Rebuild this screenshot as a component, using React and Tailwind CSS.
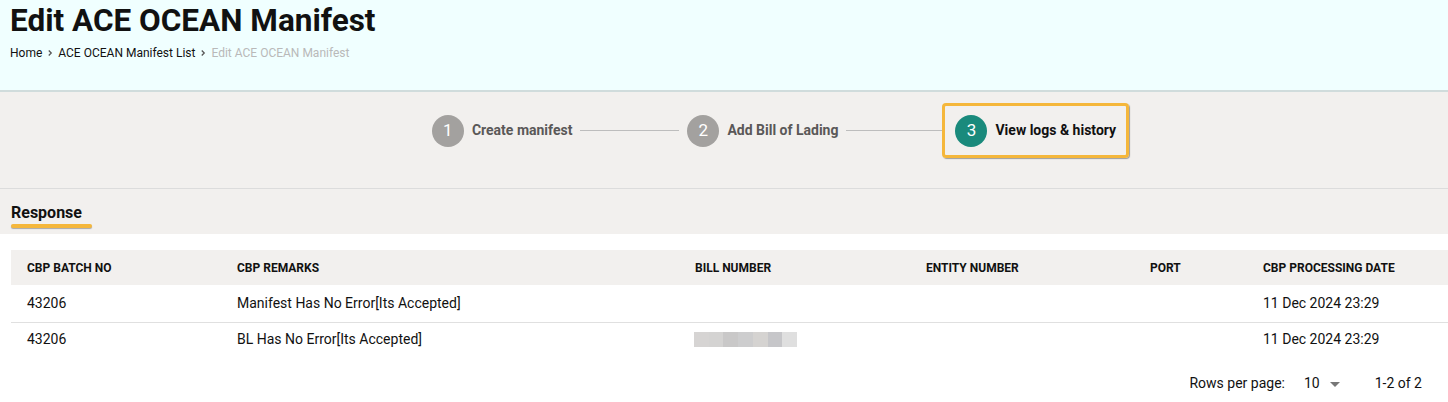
import React from 'react';

const rows = [
  { batch: '43206', remarks: 'Manifest Has No Error[Its Accepted]', bill: null, date: '11 Dec 2024 23:29' },
  { batch: '43206', remarks: 'BL Has No Error[Its Accepted]', bill: 'blur', date: '11 Dec 2024 23:29' },
];

const Chevron = () => (
  <svg width="10" height="10" viewBox="0 0 24 24" className="mx-[3px] text-[#555]">
    <path d="M9 6l6 6-6 6" fill="none" stroke="currentColor" strokeWidth="3" />
  </svg>
);

function Step({ n, label, active }) {
  return (
    <div className="flex items-center">
      <div
        className={
          active
            ? 'w-8 h-8 rounded-full bg-[#1a8a7c] text-white flex items-center justify-center text-[17px]'
            : 'w-8 h-8 rounded-full bg-[#a3a19f] text-white flex items-center justify-center text-[17px]'
        }
      >
        {n}
      </div>
      <span className={active ? 'ml-2 text-[14px] font-bold text-[#111]' : 'ml-2 text-[14px] font-bold text-[#5a5858]'}>
        {label}
      </span>
    </div>
  );
}

function BlurBlock() {
  const shades = ['#d6d4d3', '#d4d3d2', '#c9c8c8', '#cdcdce', '#d5d3d1', '#c6c6c9', '#dfdfdf'];
  return (
    <div className="flex h-[15px] w-[103px]">
      {shades.map((c, i) => (
        <div key={i} className="flex-1 h-full" style={{ background: c }} />
      ))}
    </div>
  );
}

export default function App() {
  return (
    <div className="w-[1448px] h-[402px] bg-white font-['Roboto',sans-serif] overflow-hidden">
      {/* header */}
      <div className="h-[92px] bg-[#f0ffff] border-b-2 border-[#d0dcdc] px-[10px] pt-[2px]">
        <h1 className="text-[31.5px] leading-[37px] font-bold text-[#111]">Edit ACE OCEAN Manifest</h1>
        <div className="flex items-center mt-[5px] text-[12px] text-[#111]">
          <span>Home</span>
          <Chevron />
          <span>ACE OCEAN Manifest List</span>
          <Chevron />
          <span className="text-[#b9b9b9]">Edit ACE OCEAN Manifest</span>
        </div>
      </div>

      {/* stepper */}
      <div className="h-[97px] bg-[#f2f0ee] border-b border-[#dcdcdc] flex items-start justify-center pl-[113px] pt-[11px]">
        <div className="flex items-center h-[55px]">
          <Step n="1" label="Create manifest" />
          <div className="w-[99px] h-px bg-[#bdbdbd] mx-2" />
          <Step n="2" label="Add Bill of Lading" />
          <div className="w-[96px] h-px bg-[#bdbdbd] ml-2" />
        </div>
        <div className="border-[3px] border-[#f5b73b] rounded-[4px] h-[55px] px-[10px] flex items-center shadow-[1px_1px_1px_rgba(0,0,0,0.35)]">
          <Step n="3" label="View logs & history" active />
        </div>
      </div>

      {/* response title */}
      <div className="h-[45px] bg-[#f2f0ee] px-[11px] pt-[12px]">
        <div className="inline-block">
          <div className="text-[16px] font-bold leading-[18px] text-[#111]">Response</div>
          <div className="mt-[2px] h-[4px] w-[81px] rounded-full bg-[#f5b73b] shadow-[0_1px_1px_rgba(0,0,0,0.3)]" />
        </div>
      </div>

      {/* table */}
      <div className="pl-[11px] pt-[16px]">
        <table className="w-[1437px] border-collapse text-left">
          <thead>
            <tr className="bg-[#f2f0ee] h-[35px] text-[12px] font-bold text-[#111] uppercase">
              <th className="w-[210px] pl-4 font-bold">CBP Batch No</th>
              <th className="w-[458px] pl-4 font-bold">CBP Remarks</th>
              <th className="w-[231px] pl-4 font-bold">Bill Number</th>
              <th className="w-[224px] pl-4 font-bold">Entity Number</th>
              <th className="w-[113px] pl-4 font-bold">Port</th>
              <th className="pl-4 font-bold">CBP Processing Date</th>
            </tr>
          </thead>
          <tbody className="text-[14px] text-[#111]">
            {rows.map((r, i) => (
              <tr key={i} className={i === 0 ? 'h-[37px] border-b border-[#e0e0e0]' : 'h-[35px]'}>
                <td className="pl-4">{r.batch}</td>
                <td className="pl-4">{r.remarks}</td>
                <td className="pl-[15px]">{r.bill ? <BlurBlock /> : null}</td>
                <td className="pl-4"></td>
                <td className="pl-4"></td>
                <td className="pl-4">{r.date}</td>
              </tr>
            ))}
          </tbody>
        </table>
        <div className="flex items-center justify-end h-[52px] pr-[26px] text-[14px] text-[#111]">
          <span>Rows per page:</span>
          <span className="ml-[19px]">10</span>
          <svg width="10" height="10" viewBox="0 0 10 10" className="ml-[10px] mt-[2px]">
            <path d="M0 3h10L5 8z" fill="#777" />
          </svg>
          <span className="ml-[35px]">1-2 of 2</span>
        </div>
      </div>
    </div>
  );
}
